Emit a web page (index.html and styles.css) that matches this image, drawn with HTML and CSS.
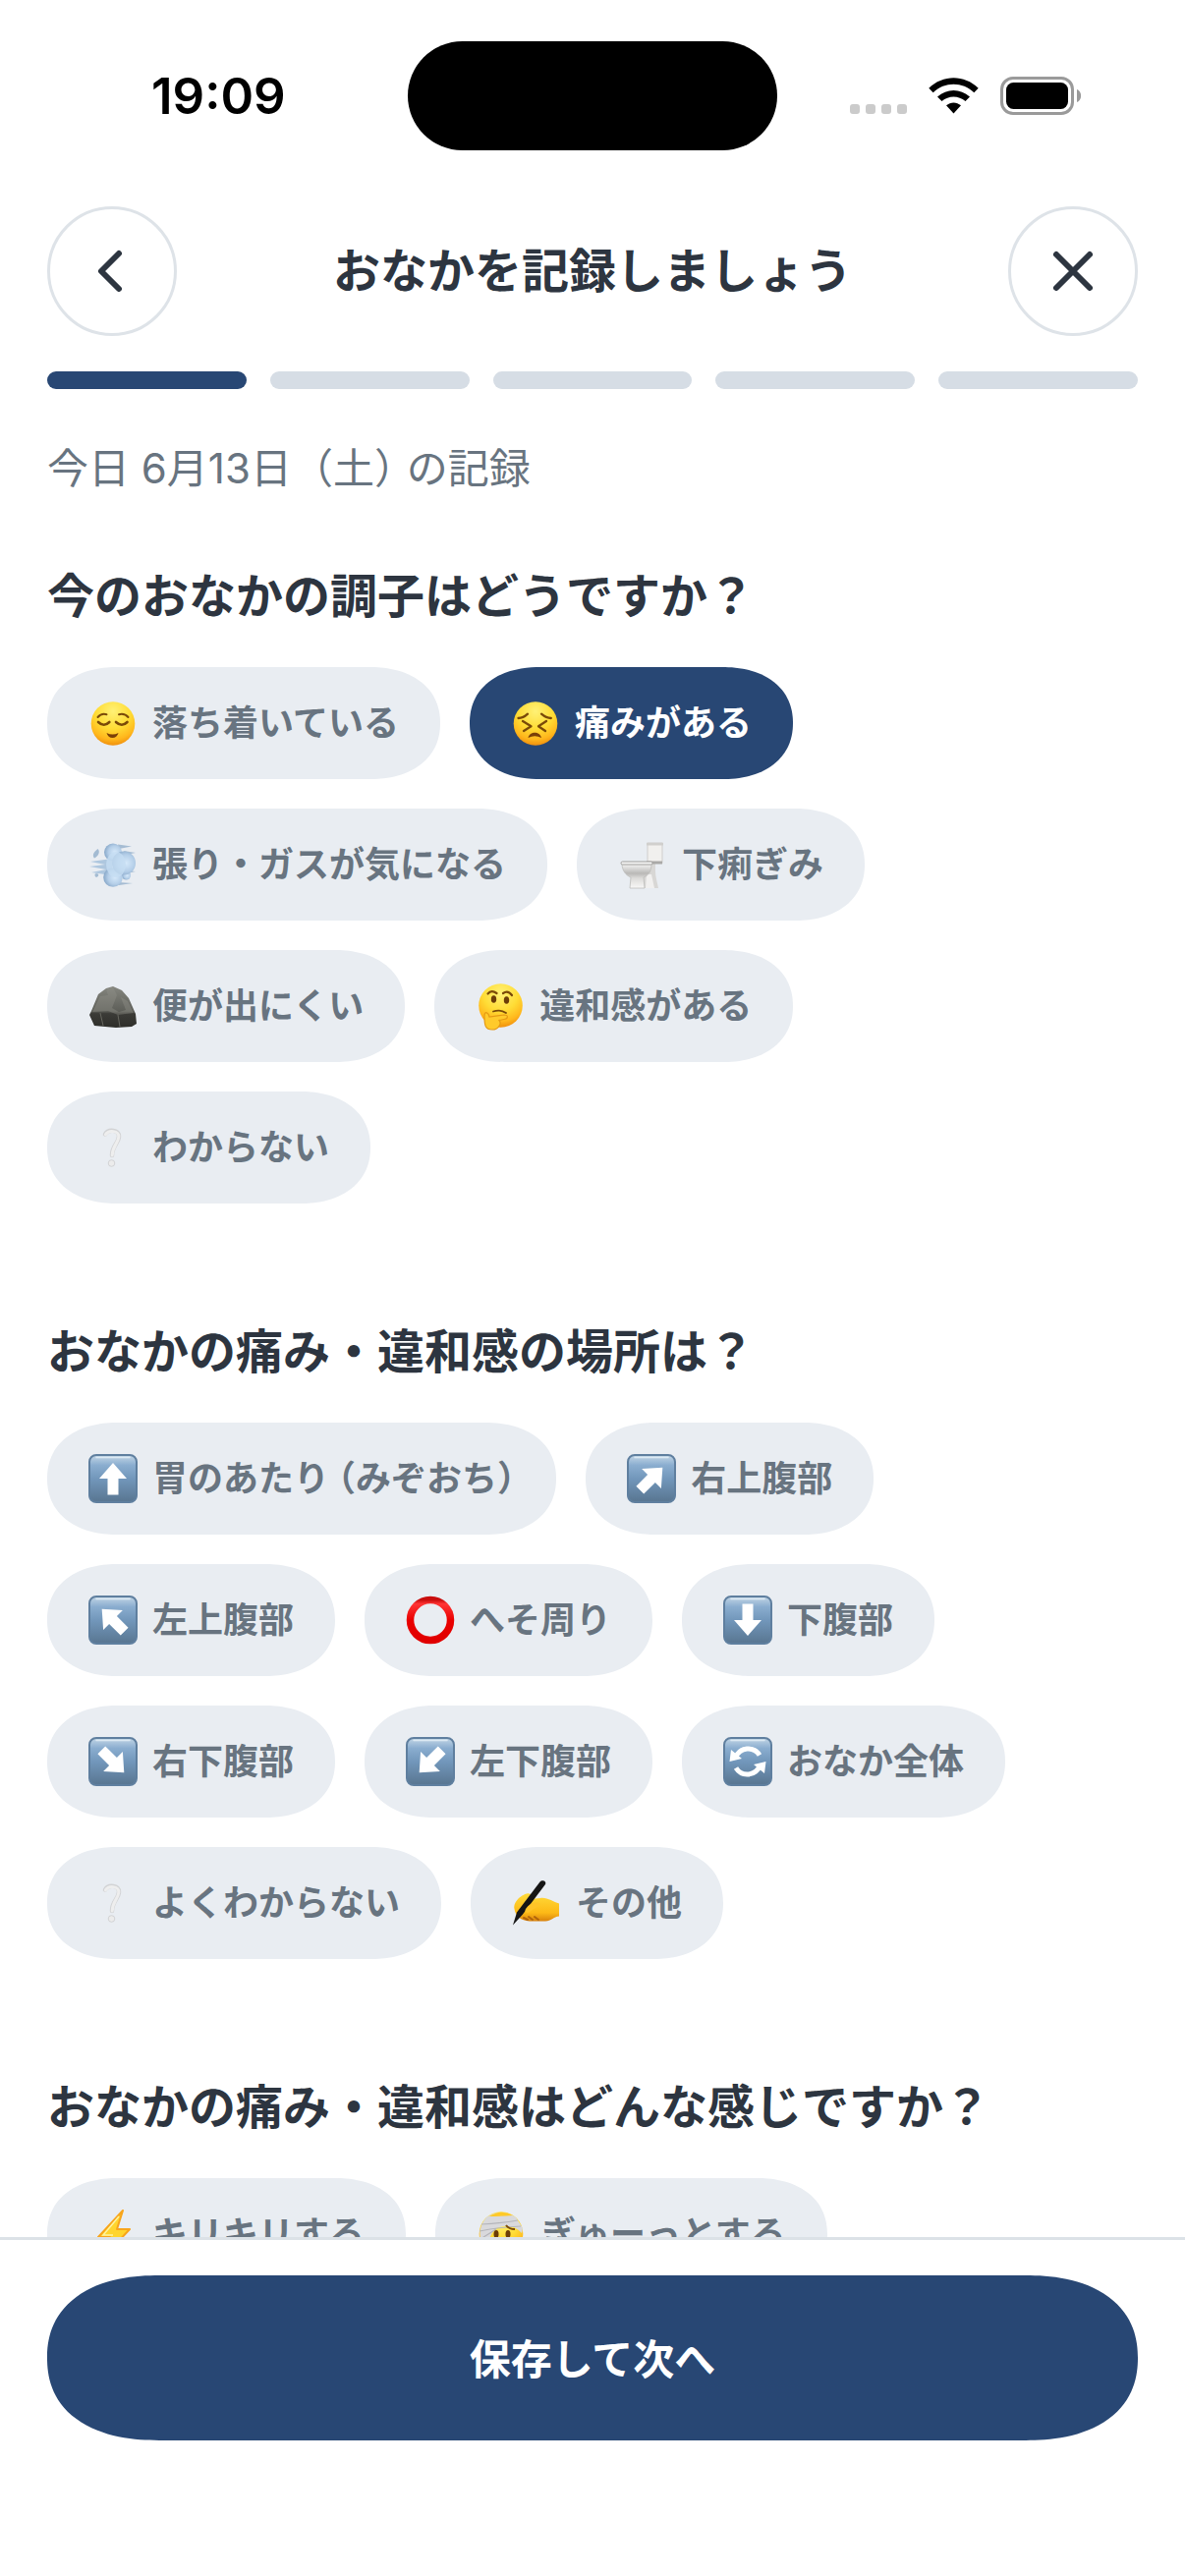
FILE: index.html
```html
<!DOCTYPE html>
<html lang="ja">
<head>
    <meta charset="UTF-8">
    <meta name="viewport" content="width=device-width, initial-scale=1.0">
    <title>おなかを記録しましょう</title>
    <link rel="stylesheet" href="styles.css">
</head>
<body>
    <!-- 共通アイコン -->
    <svg class="defs" width="0" height="0" aria-hidden="true">
        <defs>
            <radialGradient id="face" cx="50%" cy="22%" r="80%">
                <stop offset="0" stop-color="#fff176"/>
                <stop offset="0.5" stop-color="#ffdc35"/>
                <stop offset="0.8" stop-color="#ffb71c"/>
                <stop offset="1" stop-color="#ee8a0c"/>
            </radialGradient>
            <linearGradient id="tile" x1="0" y1="0" x2="0" y2="1">
                <stop offset="0" stop-color="#c3d6e6"/>
                <stop offset="0.22" stop-color="#8aadcf"/>
                <stop offset="0.5" stop-color="#7297bb"/>
                <stop offset="1" stop-color="#587590"/>
            </linearGradient>
            <radialGradient id="puff" cx="60%" cy="50%" r="60%">
                <stop offset="0" stop-color="#d6e9fa"/>
                <stop offset="0.6" stop-color="#b4cee8"/>
                <stop offset="1" stop-color="#87a7c8"/>
            </radialGradient>
            <linearGradient id="bowl" x1="0" y1="0" x2="0" y2="1">
                <stop offset="0" stop-color="#f8f8f7"/>
                <stop offset="0.4" stop-color="#b9b8b6"/>
                <stop offset="0.6" stop-color="#dddcda"/>
                <stop offset="1" stop-color="#f8f7f6"/>
            </linearGradient>
            <linearGradient id="rock" x1="0" y1="0" x2="0" y2="1">
                <stop offset="0" stop-color="#85867f"/>
                <stop offset="0.6" stop-color="#5d5e58"/>
                <stop offset="0.66" stop-color="#3b3b37"/>
                <stop offset="1" stop-color="#2e2e2a"/>
            </linearGradient>
            <linearGradient id="ring" x1="0" y1="0" x2="0" y2="1">
                <stop offset="0" stop-color="#c90d0d"/>
                <stop offset="0.1" stop-color="#ff3434"/>
                <stop offset="0.5" stop-color="#ea0000"/>
                <stop offset="1" stop-color="#e00000"/>
            </linearGradient>
            <linearGradient id="skin" x1="0" y1="0" x2="0" y2="1">
                <stop offset="0" stop-color="#ffdb3a"/>
                <stop offset="0.7" stop-color="#fdb916"/>
                <stop offset="1" stop-color="#d9820c"/>
            </linearGradient>
            <symbol id="tile-base" viewBox="0 0 50 50">
                <rect x="1" y="1" width="48" height="48" rx="7" fill="url(#tile)" stroke="#5f7f9f" stroke-width="2"/>
                <path d="M8 3.5h34" stroke="#dce9f3" stroke-width="1.5" stroke-linecap="round"/>
            </symbol>
            <symbol id="arrow" viewBox="0 0 50 50">
                <path d="M25 9 39 25H30.500V41.500H19.500V25H11Z" fill="#fff"/>
            </symbol>
            <symbol id="question" viewBox="0 0 50 50">
                <g fill="none" stroke-linecap="round">
                    <path d="M17 11.500C20 6 31.500 6.500 31 14C30.500 21 24 23 24 33" stroke="#d2d3d5" stroke-width="4.500"/>
                    <path d="M17.400 11.900C20.400 7 31 7.300 30.800 14.200C30.200 21 24.400 23.400 24.200 33" stroke="#eeeeee" stroke-width="3"/>
                </g>
                <circle cx="23.500" cy="41" r="3.300" fill="#ececec" stroke="#d2d3d5"/>
            </symbol>
        </defs>
    </svg>

    <div class="app">
        <div class="status-bar">
            <span class="status-time">19:09</span>
            <div class="island"></div>
            <svg class="status-icons" viewBox="0 0 235 40" aria-hidden="true">
                <g fill="#cbcbcb">
                    <rect x="0" y="28" width="10" height="10" rx="3"/>
                    <rect x="16" y="28" width="10" height="10" rx="3"/>
                    <rect x="32" y="28" width="10" height="10" rx="3"/>
                    <rect x="48" y="28" width="10" height="10" rx="3"/>
                </g>
                <path d="M80.300 11.800C94.500-2.200 116.500-2.200 130.700 11.800L126.300 16.300C114.500 5 96.500 5 84.700 16.300Z"/>
                <path d="M89 20.500C98.500 11.700 112.500 11.700 122 20.500L117.500 25C110.500 19 100.500 19 93.500 25Z"/>
                <path d="M98 29.300C102.500 25.400 108.500 25.400 113 29.300L105.500 37.500Z"/>
                <rect x="154.500" y="1.500" width="72" height="36" rx="11.500" fill="none" stroke="#9a9a9a" stroke-width="3"/>
                <rect x="159" y="6" width="63" height="27" rx="7.500"/>
                <path d="M231 13C236.500 15 236.500 24 231 26Z" fill="#9a9a9a"/>
            </svg>
        </div>

        <header class="header">
            <button class="circle-btn" type="button" aria-label="戻る">
                <svg viewBox="0 0 60 60"><path d="M37 12 19 30 37 48"/></svg>
            </button>
            <h1 class="title">おなかを記録しましょう</h1>
            <button class="circle-btn" type="button" aria-label="閉じる">
                <svg viewBox="0 0 60 60"><path d="M13 13 47 47M47 13 13 47"/></svg>
            </button>
        </header>

        <div class="progress">
            <span class="step active"></span>
            <span class="step"></span>
            <span class="step"></span>
            <span class="step"></span>
            <span class="step"></span>
        </div>

        <main class="content">
            <p class="date">今日 6月13日（土<span class="half">）</span> の記録</p>

            <section class="question">
                <h2>今のおなかの調子はどうですか？</h2>
                <div class="chips">
                    <button class="chip" type="button" aria-pressed="false">
                        <svg class="icon" viewBox="0 0 50 50">
                            <circle cx="25" cy="25.500" r="22.300" fill="url(#face)"/>
                            <g fill="none" stroke="#7a4a08" stroke-width="2" stroke-linecap="round">
                                <path d="M9.500 19Q13 14.800 18.500 16.200"/>
                                <path d="M31 16.200Q37 14.800 40.500 19"/>
                                <path d="M10 24Q15.800 29.500 21.300 24" stroke-width="2.600"/>
                                <path d="M28 24Q34 29.500 39.500 24" stroke-width="2.600"/>
                            </g>
                            <path d="M18.500 35Q24.500 38 30.500 35Q29 40 24.500 40T18.500 35Z" fill="#7a3f08"/>
                        </svg>
                        落ち着いている
                    </button>
                    <button class="chip selected" type="button" aria-pressed="true">
                        <svg class="icon" viewBox="0 0 50 50">
                            <circle cx="25" cy="25.500" r="22.300" fill="url(#face)"/>
                            <g fill="none" stroke="#7a4a08" stroke-width="2.300" stroke-linecap="round" stroke-linejoin="round">
                                <path d="M7.500 20Q12.500 20 17 15.700"/>
                                <path d="M31 15.700Q36 20 40.800 20"/>
                                <path d="M12 23 20.500 28.300 13 33"/>
                                <path d="M36 23 28 28.300 35 33"/>
                            </g>
                            <path d="M17.500 40C19 33 29.500 33 31 40Q24.300 36.500 17.500 40Z" fill="#7a3f08"/>
                        </svg>
                        痛みがある
                    </button>
                    <button class="chip" type="button" aria-pressed="false">
                        <svg class="icon" viewBox="0 0 50 50">
                            <path d="M30 4.500 44 6.500 31 9ZM36 11 48 13 38 15ZM38 31 48 32 39 34ZM30 43 45 44 31 46Z" fill="#a5bcd3"/>
                            <path d="M2 22 24 19V36L3 33 18 30 1 27 17 25Z" fill="#aec7df"/>
                            <circle cx="25" cy="12.500" r="9" fill="url(#puff)"/>
                            <circle cx="38.500" cy="36" r="4.500" fill="url(#puff)"/>
                            <circle cx="25" cy="38" r="9.800" fill="url(#puff)"/>
                            <circle cx="36" cy="23.500" r="12" fill="url(#puff)"/>
                            <ellipse cx="28" cy="25" rx="10" ry="13" fill="#c6ddf2" opacity="0.800"/>
                            <path d="M9.500 9C12 11 11 16 6 18.500 4 16 4.500 13 9.500 9ZM8 38C11 37 11 34 8 34 6 34 6 37 8 38Z" fill="#a3bbd2"/>
                        </svg>
                        張り・ガスが気になる
                    </button>
                    <button class="chip" type="button" aria-pressed="false">
                        <svg class="icon" viewBox="0 0 50 50">
                            <path d="M25 23H38V32C38 38 40 43 41 49H25Z" fill="#d8d7d5"/>
                            <path d="M29 35H34L37 49H28Z" fill="#f1f0ef"/>
                            <rect x="30" y="3" width="15" height="20" fill="#f1f0ee" stroke="#cfcecc"/>
                            <path d="M29 3H46V5.500H29Z" fill="#d0cfcd"/>
                            <path d="M29 21.500H45V24.500H29Z" fill="#aaa9a7"/>
                            <path d="M4 24H34C34 32 31 36 26 38L27 49H12L13 38C8 36 4 31 4 24Z" fill="url(#bowl)" stroke="#bdbcba" stroke-width="0.800"/>
                            <rect x="3" y="22" width="32" height="3" rx="1.500" fill="#f5f5f4" stroke="#9f9e9c"/>
                        </svg>
                        下痢ぎみ
                    </button>
                    <button class="chip" type="button" aria-pressed="false">
                        <svg class="icon" viewBox="0 0 50 50">
                            <path d="M3 30 10 13 18 7 25 5 34 9 41 17 48 33 49 43 44 46 28 47 6 45 1 34Z" fill="url(#rock)"/>
                            <path d="M18 8 25 6 29 14 24 27 31 31 38 29 33 16 40 20 46 32 30 34 20 30 4 31 12 15 20 14Z" fill="#90918a" opacity="0.400"/>
                            <path d="M30 34 32 46M12 32 15 45" stroke="#66665f" stroke-width="1" fill="none"/>
                        </svg>
                        便が出にくい
                    </button>
                    <button class="chip" type="button" aria-pressed="false">
                        <svg class="icon" viewBox="0 0 50 50">
                            <circle cx="25.500" cy="24.500" r="22.300" fill="url(#face)"/>
                            <ellipse cx="18.500" cy="18" rx="2.700" ry="3.800" fill="#6b3d08"/>
                            <ellipse cx="31.500" cy="19" rx="2.700" ry="3.800" fill="#6b3d08"/>
                            <g fill="none" stroke="#7a4a08" stroke-width="2.200" stroke-linecap="round">
                                <path d="M12.500 12.500Q16 8 21.500 12"/>
                                <path d="M28 12Q33 8.500 37 14"/>
                                <path d="M18 30.500Q25 28 31 32" stroke-width="1.800"/>
                            </g>
                            <path d="M9 35C9 30 13 31 14 36L29 34C34 34 33 38 29 38.500L24 39.500C27 43 23 49 17 49 10 49 9 45 9 35Z" fill="#ffca2b" stroke="#e59a14" stroke-width="1.200"/>
                        </svg>
                        違和感がある
                    </button>
                    <button class="chip" type="button" aria-pressed="false">
                        <svg class="icon"><use href="#question"/></svg>
                        わからない
                    </button>
                </div>
            </section>

            <section class="question">
                <h2>おなかの痛み・違和感の場所は？</h2>
                <div class="chips">
                    <button class="chip" type="button" aria-pressed="false">
                        <svg class="icon" viewBox="0 0 50 50"><use href="#tile-base"/><use href="#arrow"/></svg>
                        <span>胃のあたり <span class="half">（</span>みぞおち<span class="half">）</span></span>
                    </button>
                    <button class="chip" type="button" aria-pressed="false">
                        <svg class="icon" viewBox="0 0 50 50"><use href="#tile-base"/><use href="#arrow" transform="rotate(45 25 25)"/></svg>
                        右上腹部
                    </button>
                    <button class="chip" type="button" aria-pressed="false">
                        <svg class="icon" viewBox="0 0 50 50"><use href="#tile-base"/><use href="#arrow" transform="rotate(-45 25 25)"/></svg>
                        左上腹部
                    </button>
                    <button class="chip" type="button" aria-pressed="false">
                        <svg class="icon" viewBox="0 0 50 50"><circle cx="25" cy="25" r="20.500" fill="none" stroke="url(#ring)" stroke-width="7.500"/></svg>
                        へそ周り
                    </button>
                    <button class="chip" type="button" aria-pressed="false">
                        <svg class="icon" viewBox="0 0 50 50"><use href="#tile-base"/><use href="#arrow" transform="rotate(180 25 25)"/></svg>
                        下腹部
                    </button>
                    <button class="chip" type="button" aria-pressed="false">
                        <svg class="icon" viewBox="0 0 50 50"><use href="#tile-base"/><use href="#arrow" transform="rotate(135 25 25)"/></svg>
                        右下腹部
                    </button>
                    <button class="chip" type="button" aria-pressed="false">
                        <svg class="icon" viewBox="0 0 50 50"><use href="#tile-base"/><use href="#arrow" transform="rotate(-135 25 25)"/></svg>
                        左下腹部
                    </button>
                    <button class="chip" type="button" aria-pressed="false">
                        <svg class="icon" viewBox="0 0 50 50">
                            <use href="#tile-base"/>
                            <g fill="none" stroke="#fff" stroke-width="5">
                                <path d="M12.500 21C17 10 31 9 37 18.500"/>
                                <path d="M37.500 29C33 40 19 41 13 31.500"/>
                            </g>
                            <path d="M6.500 25 8 13 19 22ZM43.500 25 42 37 31 28Z" fill="#fff"/>
                        </svg>
                        おなか全体
                    </button>
                    <button class="chip" type="button" aria-pressed="false">
                        <svg class="icon"><use href="#question"/></svg>
                        よくわからない
                    </button>
                    <button class="chip" type="button" aria-pressed="false">
                        <svg class="icon" viewBox="0 0 50 50">
                            <path d="M2.500 31C1 23 11 16 16 15.300 20 15 21 18 18.500 21L29 20C36 19 42 24 48 25.500V38.500C42 39 40 43.500 34 43.500H18C9 43 3.500 38 2.500 31Z" fill="url(#skin)"/>
                            <path d="M12 40 16 42M17 39 21 42M23 39 27 42" stroke="#b0640c" stroke-width="2" stroke-linecap="round"/>
                            <path d="M28.500 3.500C30.500 1 35.500 2.500 34 6L11 36.500 1 47.500 5 34.500Z" fill="#151515"/>
                            <path d="M14 31C18 25 24 23 29 26 28 29 22 30 19 33.500 16 36 12 35 14 31Z" fill="#ffc428"/>
                        </svg>
                        その他
                    </button>
                </div>
            </section>

            <section class="question">
                <h2>おなかの痛み・違和感はどんな感じですか？</h2>
                <div class="chips">
                    <button class="chip" type="button" aria-pressed="false">
                        <svg class="icon" viewBox="0 0 50 50">
                            <path d="M35 1 10 28 22 28 15 49 42 20 29 20Z" fill="#ffd52e" stroke="#f8a51b" stroke-width="2" stroke-linejoin="round"/>
                            <path d="M31 7 15 26 25 26" fill="none" stroke="#fff3a0" stroke-width="1.500"/>
                        </svg>
                        キリキリする
                    </button>
                    <button class="chip" type="button" aria-pressed="false">
                        <svg class="icon" viewBox="0 0 50 50">
                            <circle cx="25" cy="24.500" r="22.300" fill="url(#face)"/>
                            <path d="M10 8Q25-2 40 8L47 19 46 24Q35 12 18 20L8 39Q-2 22 10 8Z" fill="#d9d9dc"/>
                            <path d="M13 7Q27 7 37 6Q25-1 13 7Z" fill="#ffc928"/>
                            <path d="M5 15Q24 14 42 11M3 22Q22 18 45 17M4 30 20 20" fill="none" stroke="#b4b5ba" stroke-width="1.200"/>
                            <ellipse cx="20" cy="25" rx="2.500" ry="4" fill="#6b3d08"/>
                            <ellipse cx="32" cy="25" rx="2.500" ry="4" fill="#6b3d08"/>
                            <path d="M30 16Q33 20 39 20" fill="none" stroke="#7a4a08" stroke-width="2"/>
                            <path d="M18 38Q25 31 32 38" fill="none" stroke="#7a3f08" stroke-width="2"/>
                        </svg>
                        ぎゅーっとする
                    </button>
                </div>
            </section>
        </main>

        <footer class="footer">
            <button class="save-btn" type="button">保存して次へ</button>
        </footer>
    </div>
</body>
</html>
```
FILE: styles.css
```css
* {
    box-sizing: border-box;
}
body {
    margin: 0;
    font-family: Inter, "Noto Sans CJK JP", sans-serif;
    color: #2d3540;
    background-color: #fff;
}
button {
    font-family: inherit;
    border: none;
    cursor: pointer;
}
.defs {
    position: absolute;
}
.app {
    display: flex;
    flex-direction: column;
    height: 100vh;
}

/* ステータスバー */
.status-bar {
    display: grid;
    grid-template-columns: 1fr auto 1fr;
    align-items: center;
    padding: 42px 0 57px;
}
.status-time {
    padding-left: 154px;
    font-size: 51px;
    font-weight: 600;
    line-height: 60px;
    color: #000;
}
.island {
    width: 376px;
    height: 111px;
    border-radius: 56px;
    background-color: #000;
}
.status-icons {
    width: 235px;
    height: 40px;
    margin-right: 106px;
    justify-self: end;
}

/* ヘッダー */
.header {
    display: flex;
    align-items: center;
    justify-content: space-between;
    padding: 0 48px;
}
.circle-btn {
    display: flex;
    align-items: center;
    justify-content: center;
    width: 132px;
    height: 132px;
    padding: 0;
    border: 3px solid #dee3e8;
    border-radius: 50%;
    background-color: #fff;
}
.circle-btn svg {
    width: 60px;
    height: 60px;
    fill: none;
    stroke: #2d3540;
    stroke-width: 6;
    stroke-linecap: round;
    stroke-linejoin: round;
}
.title {
    margin: 0;
    font-size: 48px;
    font-weight: 700;
    line-height: 72px;
}
.progress {
    display: flex;
    gap: 24px;
    padding: 36px 48px 0;
}
.step {
    flex: 1;
    height: 18px;
    border-radius: 9px;
    background-color: #d6dde5;
}
.step.active {
    background-color: #284774;
}

/* 質問 */
.content {
    flex: 1;
    min-height: 0;
    padding: 51px 48px 0;
    overflow-y: auto;
    scrollbar-width: none;
}
.date {
    margin: 0 0 64px;
    font-size: 42px;
    line-height: 60px;
    color: #687480;
}
.half {
    font-feature-settings: "halt";
}
.question {
    margin-bottom: 115px;
}
.question h2 {
    margin: 0 0 36px;
    font-size: 48px;
    font-weight: 700;
    line-height: 72px;
}
.chips {
    display: flex;
    flex-wrap: wrap;
    gap: 30px;
}
.chip {
    display: flex;
    align-items: center;
    gap: 15px;
    height: 114px;
    padding: 0 42px;
    border-radius: 57px;
    font-size: 36px;
    font-weight: 600;
    line-height: 54px;
    color: #687480;
    background-color: #e9edf2;
}
.chip.selected {
    color: #fff;
    background-color: #284774;
}
.icon {
    flex: none;
    width: 50px;
    height: 50px;
}

/* フッター */
.footer {
    padding: 36px 48px 138px;
    border-top: 3px solid #dce2e7;
    background-color: #fff;
}
.save-btn {
    width: 100%;
    height: 168px;
    padding: 0 0 4px;
    border-radius: 84px;
    font-size: 42px;
    font-weight: 600;
    color: #fff;
    background-color: #284774;
}

/* なめらかな角丸 */
@supports (corner-shape: superellipse(1.2)) {
    .chip {
        border-radius: 72px / 57px;
        corner-shape: superellipse(1.15);
    }
    .save-btn {
        border-radius: 114px / 84px;
        corner-shape: superellipse(1.2);
    }
}
```
